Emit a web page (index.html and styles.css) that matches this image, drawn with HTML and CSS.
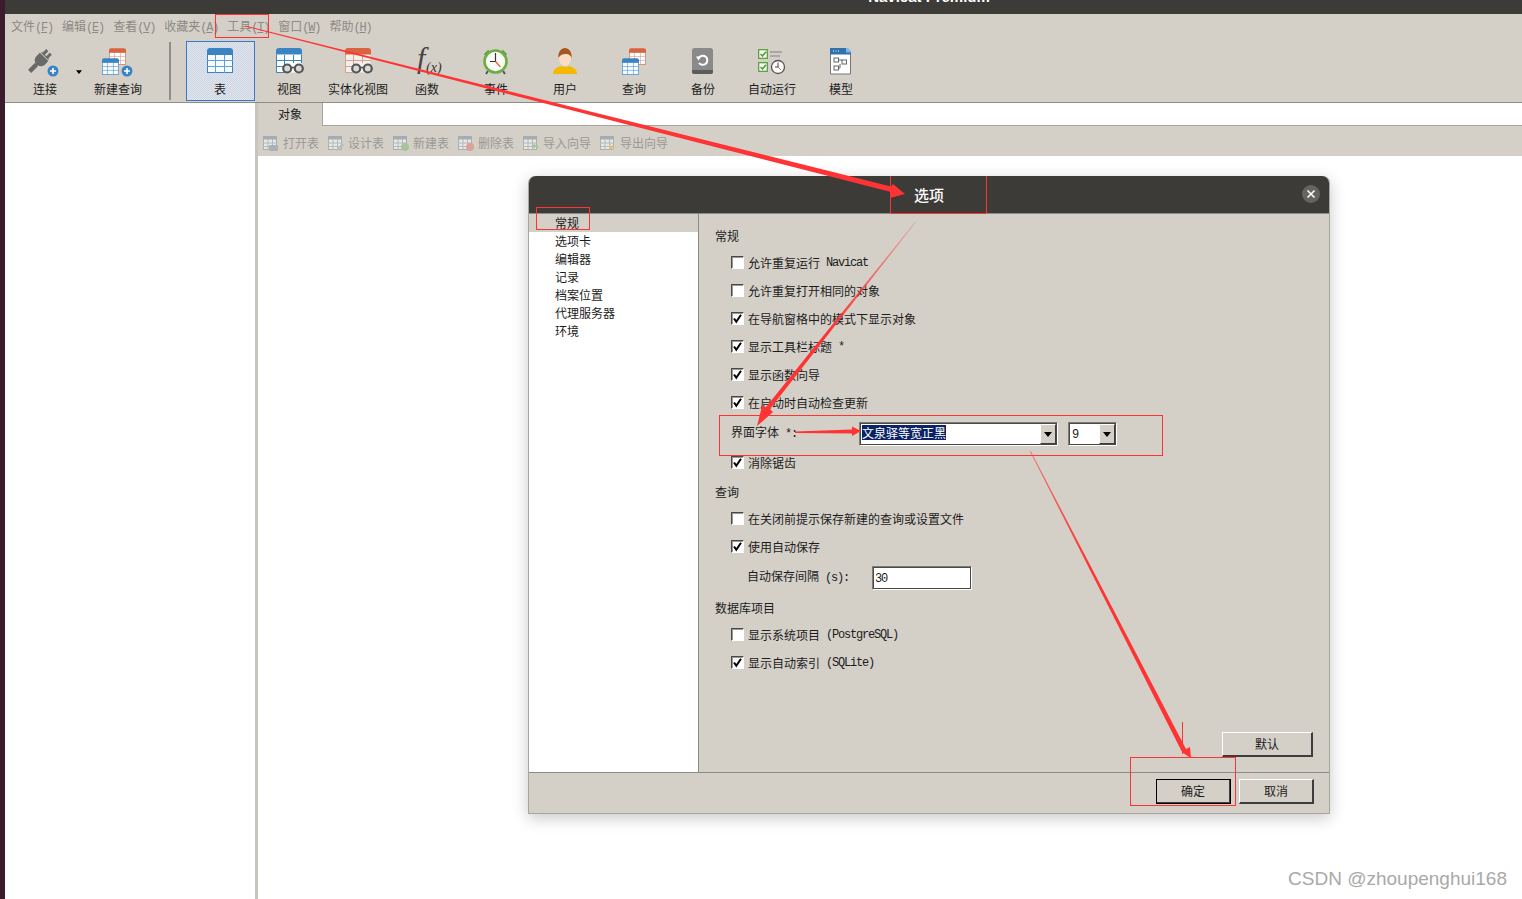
FILE: index.html
```html
<!DOCTYPE html>
<html lang="zh">
<head>
<meta charset="utf-8">
<title>Navicat Premium</title>
<link rel="stylesheet" href="styles.css">
</head>
<body>
<svg class="defs" width="0" height="0">
  <defs>
    <symbol id="grid-blue" viewBox="0 0 26 25">
      <path d="M0 3a3 3 0 0 1 3-3h20a3 3 0 0 1 3 3v4H0z" fill="#3a84c4"/>
      <rect x=".5" y="6.500" width="25" height="18" fill="#f6fafe" stroke="#3a84c4"/>
      <path d="M0 12.500h26M0 18.500h26M8.500 7v18M17.500 7v18" stroke="#5d9fd6" stroke-width="1"/>
    </symbol>
    <symbol id="grid-view" viewBox="0 0 26 25">
      <path d="M0 3a3 3 0 0 1 3-3h20a3 3 0 0 1 3 3v4H0z" fill="#3a84c4"/>
      <rect x=".5" y="6.500" width="25" height="18" fill="#fff"/>
      <path d="M.5 7v17.500H8M25.500 7v8M0 12.500h26M0 18.500h10M8.500 7v18M17.500 7v8" fill="none" stroke="#3a84c4" stroke-width="1"/>
    </symbol>
    <symbol id="grid-red" viewBox="0 0 26 25">
      <path d="M0 3a3 3 0 0 1 3-3h20a3 3 0 0 1 3 3v4H0z" fill="#d9623f"/>
      <rect x=".5" y="6.500" width="25" height="18" fill="#fff" stroke="#d9623f"/>
      <path d="M0 12.500h26M0 18.500h26M8.500 7v18M17.500 7v18" stroke="#d9a08c" stroke-width="1"/>
    </symbol>
    <symbol id="grid-matview" viewBox="0 0 26 25">
      <path d="M0 3a3 3 0 0 1 3-3h20a3 3 0 0 1 3 3v4H0z" fill="#d9623f"/>
      <rect x=".5" y="6.500" width="25" height="18" fill="#f2f0ec"/>
      <path d="M.5 7v17.500H8M0 12.500h26M0 18.500h10M8.500 7v18M17.500 7v8" fill="none" stroke="#d9a08c" stroke-width="1"/>
    </symbol>
    <symbol id="grid-sm" viewBox="0 0 14 14">
      <rect x=".5" y=".5" width="13" height="13" fill="#e9e7e2" stroke="#a9aeb2"/>
      <rect x="0" y="0" width="14" height="3.500" fill="#a3adb5"/>
      <path d="M0 7h14M0 10.500h14M5 3v11M9.500 3v11" stroke="#b5b8ba" stroke-width="1"/>
    </symbol>
    <symbol id="glasses" viewBox="0 0 22 11">
      <g fill="#d8d8d4" stroke="#555" stroke-width="2.200"><circle cx="5.200" cy="5.500" r="4"/><circle cx="16.800" cy="5.500" r="4"/></g>
      <path d="M9 4.500h4" stroke="#555" stroke-width="1.600"/>
    </symbol>
    <symbol id="tick" viewBox="0 0 11 11">
      <path d="M2 5.500l2.300 3.200L9 1.800" fill="none" stroke="#000" stroke-width="2"/>
    </symbol>
    <symbol id="arrow" viewBox="0 0 8 5"><path d="M0 0h8L4 5z" fill="#000"/></symbol>
  </defs>
</svg>

<div class="page">
  <div class="strip"></div>
  <div class="main">
    <div class="topbar"><span class="app-title">Navicat Premium</span></div>

    <nav class="menubar">
      <span class="menu">文件<span class="m">(<u>F</u>)</span></span>
      <span class="menu">编辑<span class="m">(<u>E</u>)</span></span>
      <span class="menu">查看<span class="m">(<u>V</u>)</span></span>
      <span class="menu">收藏夹<span class="m">(<u>A</u>)</span></span>
      <span class="menu">工具<span class="m">(<u>T</u>)</span></span>
      <span class="menu">窗口<span class="m">(<u>W</u>)</span></span>
      <span class="menu">帮助<span class="m">(<u>H</u>)</span></span>
    </nav>

    <div class="toolbar">
      <div class="tool tool-connect">
        <svg class="tool-icon" width="36" height="30" viewBox="0 0 36 30">
          <g transform="translate(15 12) rotate(45)" fill="#696969">
            <path d="M-6-3h12v5a6 6 0 0 1-4.500 5.500V9h-3V7.500A6 6 0 0 1-6 2z"/>
            <path d="M-5-5h10v1.200H-5z"/>
            <rect x="-4" y="-10" width="3" height="6"/>
            <rect x="1" y="-10" width="3" height="6"/>
            <rect x="-2.200" y="8" width="4.400" height="9.500"/>
          </g>
          <circle cx="26" cy="24" r="5.500" fill="#3a84c4"/>
          <path d="M23 24h6M26 21v6" stroke="#fff" stroke-width="1.600"/>
        </svg>
        <span>连接</span>
        <svg class="drop" width="6" height="4"><use href="#arrow"/></svg>
      </div>
      <div class="tool tool-newq">
        <svg class="tool-icon" width="34" height="30" viewBox="0 0 34 30">
          <use href="#grid-red" x="8" y="1" width="17" height="17"/>
          <use href="#grid-blue" x="1" y="11" width="17" height="17"/>
          <circle cx="26" cy="24" r="5.500" fill="#3a84c4"/>
          <path d="M23 24h6M26 21v6" stroke="#fff" stroke-width="1.600"/>
        </svg>
        <span>新建查询</span>
      </div>
      <div class="tool-sep"></div>
      <div class="tool tool-active">
        <svg class="tool-icon" width="31" height="30" viewBox="0 0 31 30"><use href="#grid-blue" x="2" y="1" width="26" height="25"/></svg>
        <span>表</span>
      </div>
      <div class="tool">
        <svg class="tool-icon" width="31" height="30" viewBox="0 0 31 30">
          <use href="#grid-view" x="2" y="1" width="26" height="25"/>
          <use href="#glasses" x="8" y="16" width="22" height="11"/>
        </svg>
        <span>视图</span>
      </div>
      <div class="tool">
        <svg class="tool-icon" width="31" height="30" viewBox="0 0 31 30">
          <use href="#grid-matview" x="2" y="1" width="26" height="25"/>
          <use href="#glasses" x="8" y="16" width="22" height="11"/>
        </svg>
        <span>实体化视图</span>
      </div>
      <div class="tool">
        <svg class="tool-icon fx" width="31" height="30" viewBox="0 0 31 30">
          <text class="fx-f" x="5" y="21">f</text>
          <text class="fx-x" x="14" y="25">(x)</text>
        </svg>
        <span>函数</span>
      </div>
      <div class="tool">
        <svg class="tool-icon" width="31" height="30" viewBox="0 0 31 30">
          <path d="M3 7l4-4 3 2-5 5zM26 7l-4-4-3 2 5 5z" fill="#5a9e3a"/>
          <path d="M7 24l-2 3M22 24l2 3" stroke="#555" stroke-width="2"/>
          <circle cx="14.500" cy="14.500" r="11" fill="#fbfdf6" stroke="#6cae46" stroke-width="2.600"/>
          <path d="M14.500 6V14.500H9" fill="none" stroke="#333" stroke-width="1.200"/>
          <path d="M14.500 14.500l5 5.500" stroke="#e8604a" stroke-width="1.200"/>
        </svg>
        <span>事件</span>
      </div>
      <div class="tool">
        <svg class="tool-icon" width="31" height="30" viewBox="0 0 31 30">
          <path d="M3 27c0-5 4-7 8-8l4 1 4-1c4 1 8 3 8 8z" fill="#f5b800"/>
          <ellipse cx="15" cy="11.500" rx="6" ry="7.500" fill="#fbdcc6"/>
          <path d="M8.500 11c-1-6 3-10 6.500-10s7.500 4 6.500 10c-1-3-3-4-5-4s-6 0-8 4z" fill="#a8561f"/>
        </svg>
        <span>用户</span>
      </div>
      <div class="tool">
        <svg class="tool-icon" width="31" height="30" viewBox="0 0 31 30">
          <use href="#grid-red" x="10" y="1" width="17" height="17"/>
          <use href="#grid-blue" x="3" y="11" width="17" height="17"/>
        </svg>
        <span>查询</span>
      </div>
      <div class="tool">
        <svg class="tool-icon" width="31" height="30" viewBox="0 0 31 30">
          <rect x="4" y="1" width="21" height="26" rx="2.500" fill="#8a8a8a"/>
          <path d="M4 23h21v1.500a2.500 2.500 0 0 1-2.500 2.500h-16A2.500 2.500 0 0 1 4 24.500z" fill="#5c5c5c"/>
          <path d="M11 10.500a4.600 4.600 0 1 1 0 5.500" fill="none" stroke="#fff" stroke-width="2"/>
          <path d="M8 9.500h5l-2.500 4z" fill="#fff"/>
        </svg>
        <span>备份</span>
      </div>
      <div class="tool">
        <svg class="tool-icon" width="31" height="30" viewBox="0 0 31 30">
          <g fill="#fff" stroke="#5a9e3a" stroke-width="1.300">
            <rect x="1.700" y="2.700" width="8.600" height="8.600"/>
            <rect x="1.700" y="15.700" width="8.600" height="8.600"/>
          </g>
          <path d="M3.500 7l2 2 3.500-4.200M3.500 20l2 2 3.500-4.200" fill="none" stroke="#5a9e3a" stroke-width="1.700"/>
          <path d="M13 5h12M13 9h10" stroke="#9a9a9a" stroke-width="1.600"/>
          <circle cx="21" cy="20" r="6.500" fill="#fff" stroke="#555" stroke-width="1.300"/>
          <path d="M21 15.500V20H18" fill="none" stroke="#444"/>
          <path d="M21 20l3 3" stroke="#e8604a"/>
        </svg>
        <span>自动运行</span>
      </div>
      <div class="tool">
        <svg class="tool-icon" width="31" height="30" viewBox="0 0 31 30">
          <path d="M4.500 1.500h16l4 4v21.500h-20z" fill="#fff" stroke="#777"/>
          <path d="M4 1h17l4 4v2.500H4z" fill="#2f72ac"/>
          <path d="M20 1h2l3 3v1.500h-5z" fill="#7fb6e2"/>
          <path d="M7 4h1M9.500 4h1M12 4h1" stroke="#fff"/>
          <g fill="none" stroke="#666"><rect x="8" y="11" width="4.500" height="4"/><rect x="16" y="13" width="4.500" height="4"/><rect x="8" y="19" width="4.500" height="4"/><path d="M12.500 13H16M14 17v4h-1.500"/></g>
        </svg>
        <span>模型</span>
      </div>
    </div>

    <div class="workspace">
      <aside class="sidebar"></aside>
      <div class="splitter"></div>
      <section class="content">
        <div class="tabs">
          <div class="tab">对象</div>
          <div class="tab-rest"></div>
        </div>
        <div class="subbar">
          <span class="sub"><svg width="16" height="16"><use href="#grid-sm" x="0" y="1" width="14" height="14"/><rect x="6" y="10" width="9" height="6" rx="1" fill="#a9b2b8"/></svg>打开表</span>
          <span class="sub"><svg width="16" height="16"><use href="#grid-sm" x="0" y="1" width="14" height="14"/><path d="M8 15l6-7 2 2-6 6z" fill="#b8bcc0"/></svg>设计表</span>
          <span class="sub"><svg width="16" height="16"><use href="#grid-sm" x="0" y="1" width="14" height="14"/><circle cx="12" cy="12" r="4" fill="#a9c39c"/></svg>新建表</span>
          <span class="sub"><svg width="16" height="16"><use href="#grid-sm" x="0" y="1" width="14" height="14"/><circle cx="12" cy="12" r="4" fill="#d9a29a"/></svg>删除表</span>
          <span class="sub"><svg width="16" height="16"><use href="#grid-sm" x="0" y="1" width="14" height="14"/><path d="M9 11l3-3v2h3v4h-2v-2h-1v2z" fill="#a9c39c"/></svg>导入向导</span>
          <span class="sub"><svg width="16" height="16"><use href="#grid-sm" x="0" y="1" width="14" height="14"/><path d="M9 9h2v3h1v-2l3 3-3 3v-2H9z" fill="#d8c48f"/></svg>导出向导</span>
        </div>
        <div class="canvas"></div>
      </section>
    </div>
  </div>
</div>

<div class="dialog">
  <header class="dlg-title">
    <span>选项</span>
    <span class="dlg-close"><svg width="10" height="10" viewBox="0 0 10 10"><path d="M1.500 1.500l7 7M8.500 1.500l-7 7" stroke="#fff" stroke-width="1.600"/></svg></span>
  </header>
  <div class="dlg-body">
    <ul class="cats">
      <li class="cat cat-sel">常规</li>
      <li class="cat">选项卡</li>
      <li class="cat">编辑器</li>
      <li class="cat">记录</li>
      <li class="cat">档案位置</li>
      <li class="cat">代理服务器</li>
      <li class="cat">环境</li>
    </ul>
    <div class="pane">
      <div class="heading">常规</div>
      <div class="opt"><span class="cb"></span>允许重复运行<span class="m"> Navicat</span></div>
      <div class="opt"><span class="cb"></span>允许重复打开相同的对象</div>
      <div class="opt"><span class="cb"><svg width="11" height="11"><use href="#tick"/></svg></span>在导航窗格中的模式下显示对象</div>
      <div class="opt"><span class="cb"><svg width="11" height="11"><use href="#tick"/></svg></span>显示工具栏标题<span class="m"> *</span></div>
      <div class="opt"><span class="cb"><svg width="11" height="11"><use href="#tick"/></svg></span>显示函数向导</div>
      <div class="opt"><span class="cb"><svg width="11" height="11"><use href="#tick"/></svg></span>在启动时自动检查更新</div>
      <div class="font-row">
        <span class="font-label">界面字体<span class="m"> *:</span></span>
        <span class="combo combo-font"><span class="combo-val"><span class="sel">文泉驿等宽正黑</span></span><span class="combo-btn"><svg width="8" height="5"><use href="#arrow"/></svg></span></span>
        <span class="combo combo-size"><span class="combo-val combo-num"><span class="m">9</span></span><span class="combo-btn"><svg width="8" height="5"><use href="#arrow"/></svg></span></span>
      </div>
      <div class="opt opt-short"><span class="cb"><svg width="11" height="11"><use href="#tick"/></svg></span>消除锯齿</div>
      <div class="heading heading-q">查询</div>
      <div class="opt"><span class="cb"></span>在关闭前提示保存新建的查询或设置文件</div>
      <div class="opt"><span class="cb"><svg width="11" height="11"><use href="#tick"/></svg></span>使用自动保存</div>
      <div class="interval">
        <span class="interval-label">自动保存间隔<span class="m"> (s):</span></span>
        <span class="input"><span class="m">30</span></span>
      </div>
      <div class="heading heading-db">数据库项目</div>
      <div class="opt"><span class="cb"></span>显示系统项目<span class="m"> (PostgreSQL)</span></div>
      <div class="opt"><span class="cb"><svg width="11" height="11"><use href="#tick"/></svg></span>显示自动索引<span class="m"> (SQLite)</span></div>
      <div class="pane-foot"><button class="btn btn-default">默认</button></div>
    </div>
  </div>
  <footer class="dlg-foot">
    <button class="btn btn-ok">确定</button>
    <button class="btn">取消</button>
  </footer>
</div>

<svg class="marks" width="1522" height="899" viewBox="0 0 1522 899">
  <defs>
    <linearGradient id="fade2" gradientUnits="userSpaceOnUse" x1="916" y1="222" x2="830" y2="333"><stop offset="0" stop-color="#f33" stop-opacity=".25"/><stop offset="1" stop-color="#f33"/></linearGradient>
    <linearGradient id="fade4" gradientUnits="userSpaceOnUse" x1="1030" y1="451" x2="1090" y2="566"><stop offset="0" stop-color="#f33" stop-opacity=".6"/><stop offset="1" stop-color="#f33"/></linearGradient>
  </defs>
  <g fill="none" stroke="#f33" stroke-width="1">
    <rect x="215.500" y="14.500" width="53" height="23"/>
    <path d="M890.500 176v37M890.500 213.500H986.500M986.500 176v37"/>
    <rect x="536.500" y="207.500" width="53" height="22"/>
    <rect x="719.500" y="415.500" width="443" height="40"/>
    <rect x="1130.500" y="757.500" width="105" height="48"/>
    <path d="M1182.500 722v32"/>
  </g>
  <g fill="#f33">
    <path d="M245 25.500L891 186.500 893 184 905 194 890 198 891 192 245 26.500z"/>
    <path d="M916 222L770 409 773 412 757 426 762 406 766 407 915.300 221.500z" fill="url(#fade2)"/>
    <path d="M795 431.500L852 429.500 852 426.500 861 431 852 436 852 433.500 795 433z"/>
    <path d="M1030.700 451L1186 749 1190 747 1191 758 1183 753 1181.500 751 1030 451.400z" fill="url(#fade4)"/>
  </g>
</svg>

<div class="watermark">CSDN @zhoupenghui168</div>
</body>
</html>
```
FILE: styles.css
```css
* { box-sizing: border-box; }
html, body { margin: 0; padding: 0; }
body {
  width: 1522px; height: 899px; overflow: hidden; position: relative;
  background: #fff; color: #1c1c1c;
  font: 12px/18px "Noto Sans CJK SC", "Liberation Sans", sans-serif;
}
.defs { position: absolute; }
.m { font-family: "Liberation Mono", "DejaVu Sans Mono", monospace; font-size: 12px; letter-spacing: -1.2px; white-space: pre; }

.page { display: flex; height: 899px; }
.strip { width: 5px; background: #3c1c2c; flex: none; }
.main { flex: 1; display: flex; flex-direction: column; min-width: 0; }

.topbar { height: 14px; flex: none; background: #3d3b38; overflow: hidden; display: flex; justify-content: center; padding-left: 331px; }
.app-title { color: #fff; font: bold 15px/14px "Liberation Sans", sans-serif; margin-top: -10px; }

.menubar { height: 26px; flex: none; background: #d4d0c8; display: flex; gap: 9px; padding-left: 6px; align-items: center; color: #8c8a84; }
.menu { white-space: nowrap; }

.toolbar { height: 63px; flex: none; background: #d4d0c8; border-bottom: 1px solid #8f8d88; display: flex; align-items: stretch; padding-top: 1px; padding-bottom: 1px; }
.tool { width: 69px; height: 60px; flex: none; display: flex; flex-direction: column; align-items: center; position: relative; padding-top: 6px; white-space: nowrap; }
.tool > span { margin-right: 1px; }
.tool-icon { display: block; height: 30px; margin-bottom: 3px; flex: none; }
.tool-connect { width: 80px; }
.tool-newq { width: 66px; }
.tool-connect > span, .tool-newq > span { margin-right: 0; }
.drop { position: absolute; left: 71px; top: 29px; }
.tool-sep { width: 2px; height: 58px; background: #8f8d88; margin: 1px 15px 0 18px; flex: none; }
.tool-active { border: 1px solid #3a78c8; padding-top: 5px; background-color: #d9dde6; background-image: repeating-conic-gradient(#c9d4e6 0 25%, #e4e6ea 0 50%); background-size: 2px 2px; }
.fx { overflow: visible; }
.fx-f { font: italic 30px "Liberation Serif", serif; fill: #444; }
.fx-x { font: italic 14px "Liberation Serif", serif; fill: #333; }

.workspace { flex: 1; display: flex; min-height: 0; }
.sidebar { width: 250px; flex: none; background: #fff; }
.splitter { width: 3px; flex: none; background: #c8c5bd; }
.content { flex: 1; display: flex; flex-direction: column; min-width: 0; }
.tabs { height: 23px; flex: none; display: flex; }
.tab { width: 65px; background: #d4d0c8; text-align: center; line-height: 21px; border-right: 1px solid #a8a49c; }
.tab-rest { flex: 1; background: #fff; border-bottom: 1px solid #a8a49c; }
.subbar { height: 30px; flex: none; background: #d4d0c8; display: flex; align-items: center; gap: 9px; padding: 4px 0 0 5px; color: #9b9993; }
.sub { display: flex; align-items: center; gap: 4px; white-space: nowrap; }
.canvas { flex: 1; background: #fff; }

.dialog { position: absolute; left: 528px; top: 176px; width: 802px; height: 638px; display: flex; flex-direction: column; border: 1px solid #a9a6a0; border-top: 0; border-radius: 7px 7px 0 0; background: #d4d0c8; box-shadow: 0 4px 16px rgba(0,0,0,.22); }
.dlg-title { height: 38px; flex: none; background: #3d3b38; color: #fff; border-radius: 7px 7px 0 0; display: flex; align-items: center; justify-content: center; position: relative; font-size: 15px; font-weight: 500; border-bottom: 1px solid #8d8b87; }
.dlg-close { position: absolute; right: 9px; top: 9px; width: 18px; height: 18px; border-radius: 50%; background: #666462; display: flex; align-items: center; justify-content: center; }
.dlg-body { height: 559px; flex: none; display: flex; border-bottom: 1px solid #8d8b87; }
.cats { width: 170px; flex: none; margin: 0; padding: 0; list-style: none; background: #fff; border-right: 1px solid #8d8b87; }
.cat { height: 18px; padding-left: 26px; line-height: 18px; }
.cat-sel { background: #d4d0c8; }
.pane { flex: 1; padding: 13px 16px 15px 16px; display: flex; flex-direction: column; }
.heading { height: 18px; line-height: 18px; margin-bottom: 4px; flex: none; }
.heading-q { margin-top: 13px; }
.heading-db { margin-top: 8px; }
.opt { height: 28px; display: flex; align-items: center; padding-left: 16px; flex: none; white-space: nowrap; }
.opt-short { height: 14px; }
.cb { width: 13px; height: 13px; flex: none; margin: -1px 4px 0 0; background: #fff; border: 1px solid; border-color: #4a4946 #fff #fff #4a4946; box-shadow: inset 1px 1px 0 #9a9892; }
.cb svg { display: block; }
.font-row { height: 39px; flex: none; display: flex; align-items: flex-start; padding: 5px 0 0 16px; }
.font-label { width: 128px; flex: none; margin-top: 1px; }
.combo { height: 24px; display: flex; padding: 1px; border: 1px solid; border-color: #7e7c77 #fff #fff #7e7c77; background: #fff; box-shadow: inset 0 0 0 1px #4a4946; }
.combo-font { width: 199px; }
.combo-size { width: 49px; margin-left: 10px; }
.combo-val { flex: 1; padding: 1px 0 0 1px; line-height: 15px; overflow: hidden; white-space: nowrap; }
.combo-num { padding-left: 2px; }
.sel { background: #0b2264; color: #fff; display: inline-block; line-height: 15px; }
.combo-btn { width: 16px; flex: none; background: #d4d0c8; border: 1px solid; border-color: #fff #3d3d3d #3d3d3d #fff; display: flex; align-items: center; justify-content: center; }
.combo-btn svg { display: block; }
.interval { height: 30px; flex: none; display: flex; align-items: center; padding-left: 32px; }
.interval-label { width: 125px; flex: none; margin-top: 1px; }
.input { width: 100px; height: 24px; margin-top: 4px; background: #fff; padding: 1px 0 0 2px; line-height: 18px; border: 1px solid; border-color: #7e7c77 #fff #fff #7e7c77; box-shadow: inset 0 0 0 1px #4a4946; }
.pane-foot { margin-top: auto; display: flex; justify-content: flex-end; }
.btn { font: inherit; color: #1c1c1c; background: #d4d0c8; padding: 0; width: 75px; height: 25px; border: 1px solid; border-color: #fff #3d3d3d #3d3d3d #fff; border-width: 1px 2px 2px 1px; }
.btn-default { width: 91px; }
.btn-ok { outline: 1px solid #000; outline-offset: -1px; }
.dlg-foot { flex: 1; display: flex; justify-content: flex-end; gap: 8px; padding: 6px 15px 0 0; }

.marks { position: absolute; left: 0; top: 0; pointer-events: none; }
.watermark { position: absolute; right: 15px; bottom: 7px; color: #a9a9a9; font: 19px/26px "Liberation Sans", sans-serif; white-space: nowrap; }
```
